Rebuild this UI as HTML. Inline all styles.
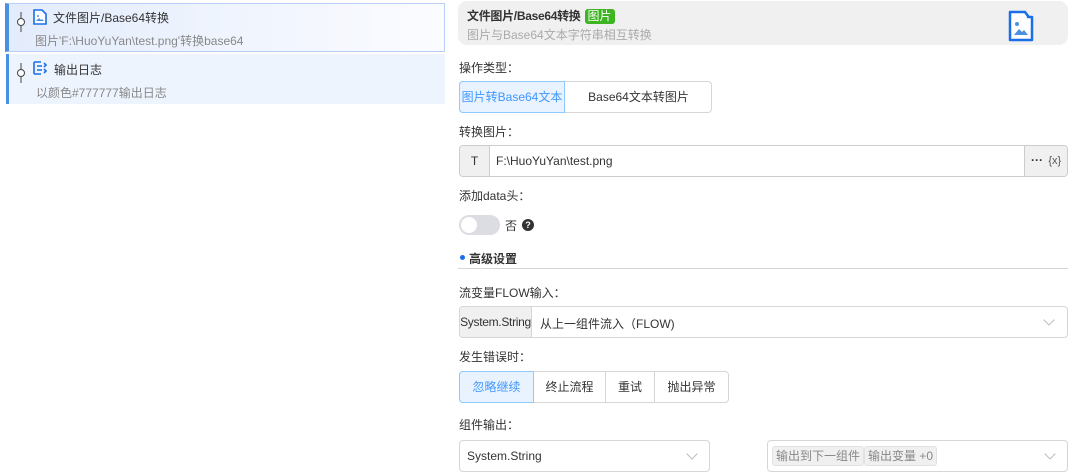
<!DOCTYPE html>
<html><head><meta charset="utf-8"><style>
*{margin:0;padding:0;box-sizing:border-box}
body{width:1072px;height:476px;background:#fff;font-family:"Liberation Sans","Noto Sans CJK SC",sans-serif;font-size:12px;color:#333;position:relative;overflow:hidden}
.a{position:absolute;white-space:nowrap}
.lbl{position:absolute;left:459px;font-size:12px;color:#333}
.box{position:absolute;border:1px solid #d6d6d6;border-radius:4px;background:#fff}
.chev{position:absolute;width:8px;height:8px;border-right:1px solid #bbb;border-bottom:1px solid #bbb;transform:rotate(45deg)}
</style></head><body>
<div class="a" style="left:5px;top:3px;width:440px;height:49px;background:linear-gradient(90deg,#e3ecfc,#fbfcff);border:1px solid #b9cff7;border-left:4px solid #4a90e2"></div>
<div class="a" style="left:6px;top:54px;width:439px;height:50px;background:#eef4fd;border-left:3px solid #4a90e2"></div>
<svg class="a" style="left:15px;top:12px" width="12" height="20"><line x1="6" y1="0" x2="6" y2="20" stroke="#444"/><circle cx="6" cy="10" r="3.5" fill="#fff" stroke="#444"/></svg>
<svg class="a" style="left:15px;top:63px" width="12" height="20"><line x1="6" y1="0" x2="6" y2="20" stroke="#444"/><circle cx="6" cy="10" r="3.5" fill="#fff" stroke="#444"/></svg>
<svg class="a" style="left:33px;top:9px" width="14" height="16"><path d="M1 1h8l4 4v10H1z" fill="#fff" stroke="#1a6fe8" stroke-width="1.6"/><path d="M3 12l3-3 2 2 1-1 2 2z" fill="#4a90e2"/><circle cx="5" cy="7" r="1" fill="#4a90e2"/></svg>
<div class="a" style="left:53px;top:9px">文件图片/Base64转换</div>
<div class="a" style="left:35px;top:32px;color:#888">图片'F:\HuoYuYan\test.png'转换base64</div>
<svg class="a" style="left:33px;top:60px" width="14" height="16"><path d="M1 2h7M1 2v12M1 14h7M4 6h5M4 10h5M11 3l2 2-2 2M11 9l2 2-2 2" stroke="#1a6fe8" stroke-width="1.6" fill="none"/></svg>
<div class="a" style="left:54px;top:61px">输出日志</div>
<div class="a" style="left:36px;top:84px;color:#888">以颜色#777777输出日志</div>

<div class="a" style="left:458px;top:1px;width:610px;height:44px;background:#f0f0f0;border-radius:9px"></div>
<div class="a" style="left:467px;top:7px;font-weight:bold;letter-spacing:-0.3px">文件图片/Base64转换 <span style="display:inline-block;font-weight:normal;letter-spacing:0;padding:0 3px;height:15px;background:#3cb521;color:#fff;border-radius:3px;text-align:center;line-height:15px;margin-left:1px">图片</span></div>
<div class="a" style="left:467px;top:26px;color:#aaa">图片与Base64文本字符串相互转换</div>
<svg class="a" style="left:1008px;top:10px" width="26" height="32"><path d="M2 2h15l3 4v1h4v23H2z" fill="#fff" stroke="#1a6fe8" stroke-width="2.5" stroke-linejoin="round"/><path d="M6 25l5-6 3 3 2-2 4 5z" fill="#4a90e2"/><circle cx="9" cy="14" r="2" fill="#4a90e2"/></svg>

<div class="lbl" style="top:59px">操作类型：</div>
<div class="box" style="left:459px;top:81px;width:253px;height:32px"></div>
<div class="a" style="left:459px;top:81px;width:106px;height:32px;background:#e8f3ff;border:1px solid #91caff;border-radius:4px 0 0 4px;color:#4096ff;text-align:center;line-height:30px">图片转Base64文本</div>
<div class="a" style="left:565px;top:81px;width:147px;height:32px;text-align:center;line-height:32px">Base64文本转图片</div>

<div class="lbl" style="top:123px">转换图片：</div>
<div class="box" style="left:459px;top:145px;width:609px;height:32px;overflow:hidden;border-color:#ccc">
<div class="a" style="left:0;top:0;width:30px;height:30px;background:#f0f0f0;border-right:1px solid #ccc;text-align:center;line-height:30px">T</div>
<div class="a" style="left:36px;top:8px">F:\HuoYuYan\test.png</div>
<div class="a" style="left:564px;top:0;width:44px;height:30px;background:#f0f0f0;border-left:1px solid #ccc;line-height:28px;padding-left:6px;font-weight:bold">··· <span style="font-weight:normal;color:#555;margin-left:2px;font-size:11px">{x}</span></div>
</div>

<div class="lbl" style="top:187px">添加data头：</div>
<div class="a" style="left:459px;top:215px;width:41px;height:20px;background:#dcdde2;border-radius:10px"><div class="a" style="left:2px;top:2px;width:16px;height:16px;border-radius:50%;background:#fff"></div></div>
<div class="a" style="left:505px;top:217px">否</div>
<div class="a" style="left:522px;top:219px;width:12px;height:12px;border-radius:50%;background:#333;color:#fff;font-size:9px;font-weight:bold;text-align:center;line-height:12px">?</div>

<div class="a" style="left:460px;top:255px;width:5px;height:5px;border-radius:50%;background:#1a6fe8"></div>
<div class="a" style="left:469px;top:250px;font-weight:bold">高级设置</div>
<div class="a" style="left:458px;top:268px;width:610px;height:1px;background:#d4d4d4"></div>

<div class="lbl" style="top:284px">流变量FLOW输入：</div>
<div class="box" style="left:459px;top:306px;width:609px;height:32px;overflow:hidden">
<div class="a" style="left:0;top:0;width:72px;height:30px;background:#f0f0f0;border-right:1px solid #d6d6d6;text-align:center;line-height:30px;letter-spacing:-0.3px">System.String</div>
<div class="a" style="left:80px;top:8px">从上一组件流入（FLOW)</div>
<div class="chev" style="left:585px;top:9px"></div>
</div>

<div class="lbl" style="top:348px">发生错误时：</div>
<div class="box" style="left:459px;top:371px;width:270px;height:32px"></div>
<div class="a" style="left:459px;top:371px;width:75px;height:32px;background:#e8f3ff;border:1px solid #91caff;border-radius:4px 0 0 4px;color:#4096ff;text-align:center;line-height:30px">忽略继续</div>
<div class="a" style="left:534px;top:372px;width:72px;height:30px;border-right:1px solid #d6d6d6;text-align:center;line-height:30px">终止流程</div>
<div class="a" style="left:606px;top:372px;width:49px;height:30px;border-right:1px solid #d6d6d6;text-align:center;line-height:30px">重试</div>
<div class="a" style="left:655px;top:372px;width:73px;height:30px;text-align:center;line-height:30px">抛出异常</div>

<div class="lbl" style="top:416px">组件输出：</div>
<div class="box" style="left:459px;top:440px;width:251px;height:32px">
<div class="a" style="left:7px;top:8px">System.String</div>
<div class="chev" style="left:228px;top:9px"></div>
</div>
<div class="box" style="left:767px;top:440px;width:301px;height:32px">
<div class="a" style="left:4px;top:5px;padding:0 3px;height:20px;background:#f0f0f0;border:1px solid #e2e2e2;border-radius:3px;color:#888;line-height:18px">输出到下一组件</div>
<div class="a" style="left:96px;top:5px;padding:0 3px;height:20px;background:#f0f0f0;border:1px solid #e2e2e2;border-radius:3px;color:#888;line-height:18px">输出变量 +0</div>
<div class="chev" style="left:278px;top:9px"></div>
</div>
</body></html>
